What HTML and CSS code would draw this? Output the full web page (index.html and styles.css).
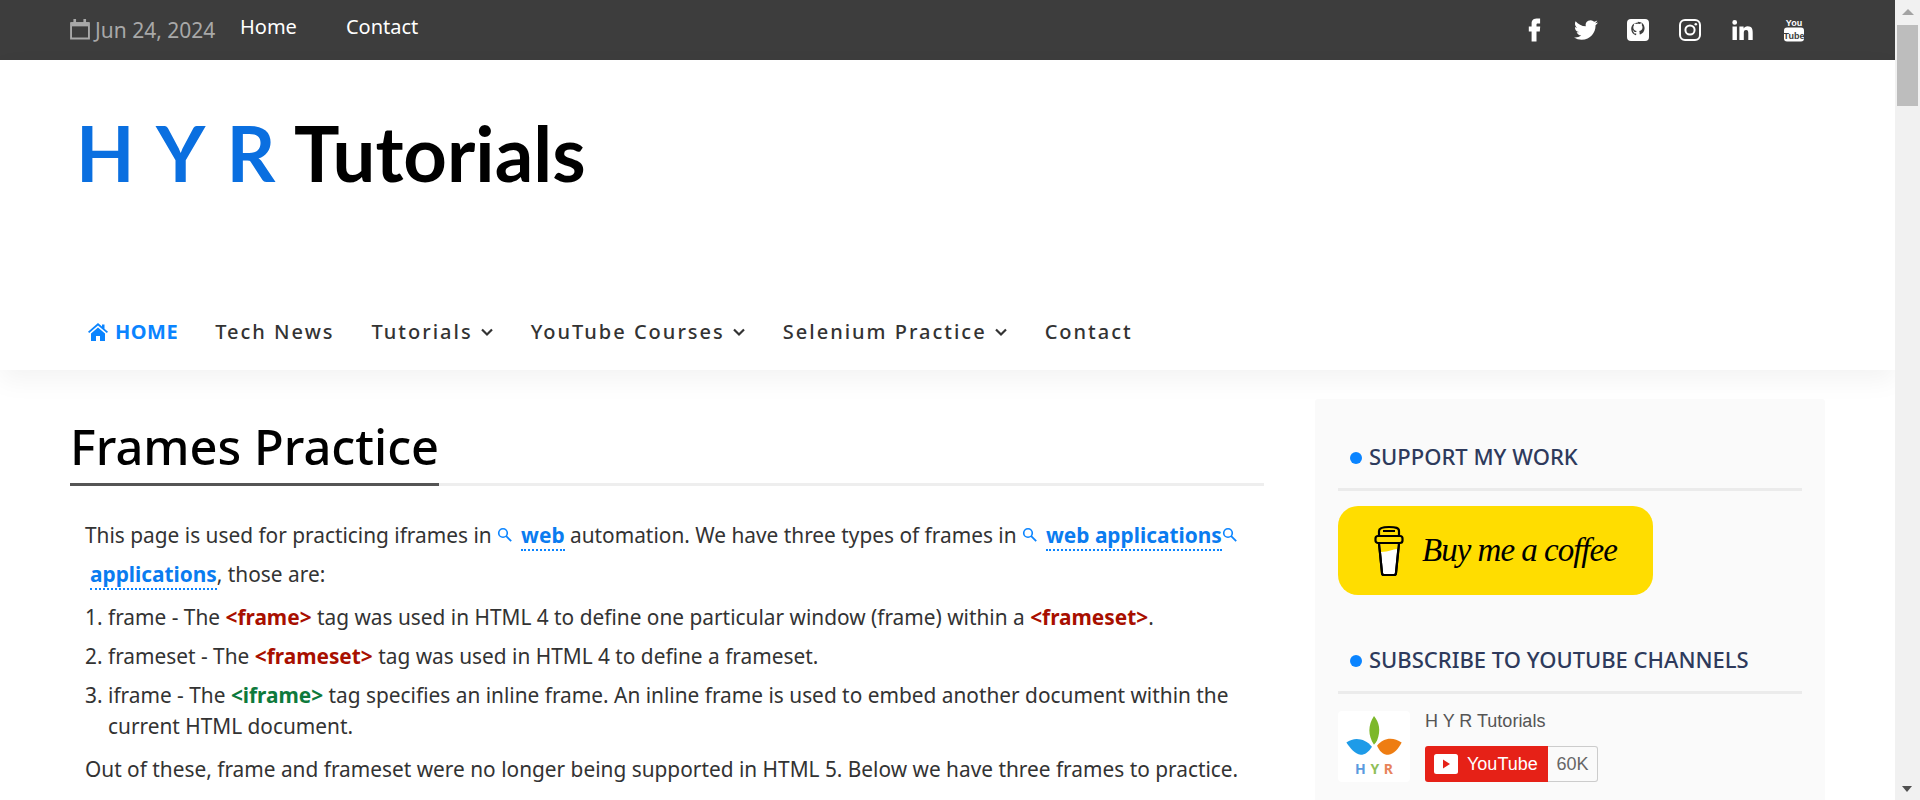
FILE: index.html
```html
<!DOCTYPE html>
<html lang="en">
<head>
    <meta charset="UTF-8">
    <title>Frames Practice - H Y R Tutorials</title>
    <link rel="stylesheet" href="styles.css">
</head>
<body>
<div class="window">
    <div class="page">
        <div class="topbar">
            <div class="topbar-left">
                <span class="date">
                    <svg class="cal-icon" viewBox="0 0 19 20"><path d="M1 4.500h17V19H1z" fill="none" stroke="#a8a8a8" stroke-width="1.800"/><path d="M1 3.500h17v4H1z" fill="#a8a8a8"/><path d="M4.500 0.500v4 M14 0.500v4" stroke="#a8a8a8" stroke-width="2.500"/></svg>
                    Jun 24, 2024
                </span>
                <a class="top-link" href="#">Home</a>
                <a class="top-link" href="#">Contact</a>
            </div>
            <div class="socials">
                <svg class="social" viewBox="0 0 24 24"><path fill="#fff" d="M14.500 8.500V6.600c0-.9.6-1.100 1-1.100h2.600V.5L14.500.5c-4 0-4.900 3-4.900 4.900v3.100H6.800v5h2.800V23.500h4.900v-10h3.300l.4-5z"/></svg>
                <svg class="social" viewBox="0 0 24 24"><path fill="#fff" d="M23.953 4.570a10 10 0 01-2.825.775 4.958 4.958 0 002.163-2.723c-.951.555-2.005.959-3.127 1.184a4.920 4.920 0 00-8.384 4.482C7.690 8.095 4.067 6.130 1.640 3.162a4.822 4.822 0 00-.666 2.475c0 1.710.870 3.213 2.188 4.096a4.904 4.904 0 01-2.228-.616v.060a4.923 4.923 0 003.946 4.827 4.996 4.996 0 01-2.212.085 4.936 4.936 0 004.604 3.417 9.867 9.867 0 01-6.102 2.105c-.390 0-.779-.023-1.170-.067a13.995 13.995 0 007.557 2.209c9.053 0 13.998-7.496 13.998-13.985 0-.210 0-.420-.015-.630A9.935 9.935 0 0024 4.590z"/></svg>
                <svg class="social" viewBox="0 0 24 24"><rect x="1" y="1" width="22" height="22" rx="4" fill="#fff"/><path fill="#3d3d3d" d="M12 4.500c-4 0-6.800 2.800-6.800 6.500 0 2.900 1.900 5.400 4.500 6.200.3 0 .5-.1.5-.4v-1.300c-1.700.4-2.300-.7-2.500-1.300-.1-.3-.6-1.100-.9-1.300-.2-.1-.3-.4 0-.4.600 0 1 .5 1.100.8.700 1.100 1.700.8 2.300.6 0-.5.200-.8.500-1-1.700-.2-3.400-.9-3.400-3.700 0-.8.200-1.500.700-2 0-.2-.300-1 .1-2 0 0 .7-.2 2 .7.600-.1 1.200-.2 1.800-.2s1.200.1 1.800.2c1.300-.9 2-.7 2-.7.400 1 .1 1.800.1 2 .5.500.7 1.200.7 2 0 2.800-1.700 3.500-3.400 3.700.3.200.5.700.5 1.300v1.900c0 .3.200.4.500.4 2.600-.8 4.500-3.300 4.500-6.200 0-3.700-2.800-6.500-6.800-6.500z"/></svg>
                <svg class="social" viewBox="0 0 24 24"><rect x="2" y="2" width="20" height="20" rx="5" fill="none" stroke="#fff" stroke-width="2"/><circle cx="12" cy="12" r="4.600" fill="none" stroke="#fff" stroke-width="2"/><circle cx="17.800" cy="6.200" r="1.300" fill="#fff"/></svg>
                <svg class="social" viewBox="0 0 24 24"><path fill="#fff" d="M2.500 8.500h4.400V22H2.500z M4.700 2a2.400 2.400 0 110 4.800 2.400 2.400 0 010-4.800z M9.400 8.500h4.200v1.900c.6-1.100 2-2.200 4-2.200 4.300 0 5.100 2.800 5.100 6.500V22h-4.400v-6.500c0-1.600 0-3.500-2.200-3.500s-2.300 1.700-2.300 3.400V22H9.400z"/></svg>
                <svg class="social" viewBox="0 0 24 24"><text class="yt-you" x="12" y="8" text-anchor="middle">You</text><rect x="2" y="9.500" width="20" height="14" rx="3" fill="#fff"/><text class="yt-tube" x="12" y="20.500" text-anchor="middle">Tube</text></svg>
            </div>
        </div>

        <header class="masthead">
            <div class="logo"><span class="logo-hyr">H Y R</span><span class="logo-name">Tutorials</span></div>
            <nav class="mainnav">
                <a class="nav-item active" href="#">
                    <svg class="home-icon" viewBox="0 0 20 18"><path fill="#0a84ff" d="M10 0l4 3.500V1.500h2.500v4.200L20 8.800l-1.200 1.300L10 2.500 1.200 10.100 0 8.800z M3 10.500L10 4.500l7 6V18h-5v-5H8v5H3z"/></svg>
                    HOME
                </a>
                <a class="nav-item" href="#">Tech News</a>
                <a class="nav-item" href="#">Tutorials <svg class="chev" viewBox="0 0 14 10"><path d="M2 2.500l5 5 5-5" fill="none" stroke="#333" stroke-width="2.200"/></svg></a>
                <a class="nav-item" href="#">YouTube Courses <svg class="chev" viewBox="0 0 14 10"><path d="M2 2.500l5 5 5-5" fill="none" stroke="#333" stroke-width="2.200"/></svg></a>
                <a class="nav-item" href="#">Selenium Practice <svg class="chev" viewBox="0 0 14 10"><path d="M2 2.500l5 5 5-5" fill="none" stroke="#333" stroke-width="2.200"/></svg></a>
                <a class="nav-item" href="#">Contact</a>
            </nav>
        </header>

        <div class="content">
            <main class="post">
                <div class="post-head"><h1>Frames Practice</h1></div>
                <div class="post-body">
                    <p class="lead">This page is used for practicing iframes in <svg class="lens" viewBox="0 0 16 16"><circle cx="6" cy="6" r="4.300" fill="none" stroke="#0a84ff" stroke-width="1.600"/><path d="M9.200 9.200l5 5" stroke="#0a84ff" stroke-width="1.800"/></svg><a class="kw" href="#">web</a> automation. We have three types of frames in <svg class="lens" viewBox="0 0 16 16"><circle cx="6" cy="6" r="4.300" fill="none" stroke="#0a84ff" stroke-width="1.600"/><path d="M9.200 9.200l5 5" stroke="#0a84ff" stroke-width="1.800"/></svg><a class="kw" href="#">web applications</a><svg class="lens lens-tight" viewBox="0 0 16 16"><circle cx="6" cy="6" r="4.300" fill="none" stroke="#0a84ff" stroke-width="1.600"/><path d="M9.200 9.200l5 5" stroke="#0a84ff" stroke-width="1.800"/></svg> <a class="kw kw-indent" href="#">applications</a>, those are:</p>
                    <ol class="frame-list">
                        <li>frame - The <b class="tag-red">&lt;frame&gt;</b> tag was used in HTML 4 to define one particular window (frame) within a <b class="tag-red">&lt;frameset&gt;</b>.</li>
                        <li>frameset - The <b class="tag-red">&lt;frameset&gt;</b> tag was used in HTML 4 to define a frameset.</li>
                        <li>iframe - The <b class="tag-green">&lt;iframe&gt;</b> tag specifies an inline frame. An inline frame is used to embed another document within the current HTML document.</li>
                    </ol>
                    <p class="outro">Out of these, frame and frameset were no longer being supported in HTML 5. Below we have three frames to practice.</p>
                </div>
            </main>

            <aside class="sidebar">
                <h3 class="widget-title"><span class="dot"></span>SUPPORT MY WORK</h3>
                <a class="coffee" href="#">
                    <svg class="cup" viewBox="0 0 30 52"><path d="M5 18l3 30c0 1.500 1 2 2 2h10c1 0 2-.5 2-2l3-30z" fill="#fff" stroke="#000" stroke-width="2.200"/><path d="M6 18h18l-.6 6c-5 0-8 3-16.600 3z" fill="#ffdd00"/><path d="M5 18l3 30c0 1.500 1 2 2 2h10c1 0 2-.5 2-2l3-30z" fill="none" stroke="#000" stroke-width="2.200"/><rect x="1.500" y="11" width="27" height="7" rx="2.500" fill="#ffdd00" stroke="#000" stroke-width="2.200"/><path d="M5 11V6c0-3 3-4 10-4s10 1 10 4v5 M9 6h12" fill="none" stroke="#000" stroke-width="2.200"/></svg>
                    <span class="coffee-text">Buy me a coffee</span>
                </a>
                <h3 class="widget-title second"><span class="dot"></span>SUBSCRIBE TO YOUTUBE CHANNELS</h3>
                <div class="channel">
                    <div class="avatar">
                        <svg class="leaves" viewBox="0 0 56 44"><path d="M28 0c5 6 7 14 3 24-1 2-2 3-3 4-6-9-6-19 0-28z" fill="#7cb82a"/><path d="M1 26c8-6 18-4 25 4-3 5-7 8-11 8-6-1-10-6-14-12z" fill="#1e9be8"/><path d="M55 26c-8-6-18-5-24 3 2 5 6 9 11 9 6-1 10-6 13-12z" fill="#ee7d12"/></svg>
                        <div class="avatar-name"><span class="h">H</span> <span class="y">Y</span> <span class="r">R</span></div>
                    </div>
                    <div class="channel-info">
                        <div class="channel-name">H Y R Tutorials</div>
                        <div class="yt-btn">
                            <span class="yt-red"><svg class="yt-play" viewBox="0 0 24 20"><rect width="24" height="20" rx="2.500" fill="#fff"/><path d="M9 5.500l7 4.500-7 4.500z" fill="#e62117"/></svg>YouTube</span><span class="yt-count">60K</span>
                        </div>
                    </div>
                </div>
            </aside>
        </div>
    </div>

    <div class="scrollbar">
        <div class="arrow-up"></div>
        <div class="thumb"></div>
        <div class="arrow-down"></div>
    </div>
</div>
</body>
</html>
```

FILE: styles.css
```css
* {
    box-sizing: border-box;
}
html, body {
    margin: 0;
    padding: 0;
    height: 800px;
    overflow: hidden;
}
body {
    font-family: "Noto Sans", Arial, sans-serif;
    font-size: 20.850px;
    color: #333;
    background: #fff;
}
a {
    text-decoration: none;
}
.window {
    display: flex;
    height: 800px;
}
.page {
    flex: 1;
    min-width: 0;
    overflow: hidden;
}

/* top bar */
.topbar {
    height: 60px;
    background: #3d3d3d;
    display: flex;
    justify-content: space-between;
    align-items: center;
    padding: 0 89px 0 70px;
}
.topbar-left {
    display: flex;
    align-items: center;
}
.date {
    display: flex;
    align-items: center;
    gap: 5px;
    width: 170px;
    color: #a8a8a8;
    font-size: 21px;
}
.cal-icon {
    width: 20px;
    height: 22px;
    margin-top: -2px;
}
.top-link {
    color: #fff;
    font-size: 20px;
    margin-right: 49px;
    margin-top: -8px;
}
.socials {
    display: flex;
    gap: 28px;
}
.social {
    width: 24px;
    height: 24px;
}
.yt-you {
    font: bold 9px "Liberation Sans", sans-serif;
    fill: #fff;
}
.yt-tube {
    font: bold 9px "Liberation Sans", sans-serif;
    fill: #3d3d3d;
}

/* header */
.masthead {
    height: 310px;
    background: #fff;
    box-shadow: 0 10px 25px rgba(0, 0, 0, 0.05);
    padding: 52px 0 0 76px;
    position: relative;
}
.logo {
    display: flex;
    align-items: baseline;
    height: 82px;
    font-family: Lato, sans-serif;
    font-size: 76px;
    line-height: 82px;
    color: #000;
}
.logo-hyr {
    color: #0a6fe0;
    font-weight: 700;
    width: 218px;
    word-spacing: 6px;
}
.logo-name {
    font-weight: 700;
}
.mainnav {
    display: flex;
    align-items: center;
    gap: 37px;
    margin-top: 124px;
    margin-left: 12px;
}
.nav-item {
    display: flex;
    align-items: center;
    gap: 7px;
    color: #333;
    font-size: 20px;
    letter-spacing: 2px;
    font-weight: 500;
}
.nav-item.active {
    color: #0a84ff;
    font-weight: 700;
    letter-spacing: 0.5px;
}
.home-icon {
    width: 20px;
    height: 18px;
}
.chev {
    width: 14px;
    height: 10px;
}

/* content */
.content {
    display: grid;
    grid-template-columns: 1194px 510px;
    column-gap: 51px;
    padding: 29px 0 0 70px;
}
.post-head {
    border-bottom: 3px solid #eee;
    height: 87px;
}
h1 {
    display: inline-block;
    margin: 0;
    height: 87px;
    padding-top: 17px;
    border-bottom: 3px solid #555;
    font-size: 48.800px;
    line-height: 60px;
    font-weight: 500;
    color: #000;
}
.post-body {
    padding: 0 15px;
}
.lead {
    margin: 30px 0 0;
    line-height: 39px;
}
.lens {
    width: 16px;
    height: 16px;
    margin-right: 8px;
}
.lens-tight {
    margin-right: 0;
}
.kw {
    color: #0a7cf0;
    font-weight: 700;
    border-bottom: 2px dotted #0a84ff;
    line-height: 1;
}
.kw-indent {
    margin-left: 5px;
}
.frame-list {
    margin: 8px 0 0;
    padding: 0 0 0 23px;
}
.frame-list li {
    line-height: 31px;
    margin-bottom: 8px;
}
.tag-red {
    color: #a80f00;
}
.tag-green {
    color: #0e7a3c;
}
.outro {
    margin: 12px 0 0;
    line-height: 31px;
}

/* sidebar */
.sidebar {
    background: #fafafa;
    height: 420px;
    padding: 37px 23px 0;
    border-radius: 3px;
}
.widget-title {
    margin: 0;
    height: 55px;
    border-bottom: 3px solid #ebebeb;
    padding: 0 0 0 12px;
    font-size: 22px;
    line-height: 40px;
    font-weight: 500;
    color: #2e3a5c;
    display: flex;
    align-items: flex-start;
}
.widget-title.second {
    margin-top: 44px;
}
.dot {
    width: 12px;
    height: 12px;
    border-radius: 50%;
    background: #0a84ff;
    margin: 16px 7px 0 0;
}
.coffee {
    display: flex;
    align-items: center;
    gap: 18px;
    width: 315px;
    height: 89px;
    margin-top: 15px;
    padding-left: 36px;
    background: #ffdd00;
    border-radius: 20px;
}
.cup {
    width: 30px;
    height: 52px;
}
.coffee-text {
    font-family: "Liberation Serif", serif;
    font-style: italic;
    font-size: 33px;
    letter-spacing: -1px;
    color: #000;
}
.channel {
    display: flex;
    gap: 15px;
    margin-top: 17px;
}
.avatar {
    width: 72px;
    height: 71px;
    background: #fff;
    border-radius: 4px;
    padding-top: 5px;
    text-align: center;
}
.leaves {
    display: block;
    width: 58px;
    height: 45px;
    margin: 0 auto;
}
.avatar-name {
    font-size: 14px;
    font-weight: 700;
    line-height: 18px;
    margin-top: -1px;
    word-spacing: 1px;
}
.avatar-name .h { color: #5b9be0; }
.avatar-name .y { color: #8fbf5a; }
.avatar-name .r { color: #e8835a; }
.channel-info {
    font-family: "Liberation Sans", Arial, sans-serif;
}
.channel-name {
    font-size: 18px;
    line-height: 20px;
    color: #555;
}
.yt-btn {
    display: flex;
    margin-top: 15px;
    height: 36px;
}
.yt-red {
    display: flex;
    align-items: center;
    gap: 9px;
    width: 123px;
    padding-left: 9px;
    background: #e62117;
    color: #fff;
    font-size: 18px;
    border-radius: 3px 0 0 3px;
}
.yt-play {
    width: 24px;
    height: 20px;
}
.yt-count {
    display: flex;
    align-items: center;
    justify-content: center;
    width: 50px;
    border: 1px solid #ccc;
    border-left: 0;
    border-radius: 0 3px 3px 0;
    font-size: 18px;
    color: #666;
}

/* page scrollbar */
.scrollbar {
    width: 25px;
    background: #f1f1f1;
    position: relative;
    padding: 25px 2px 0;
}
.thumb {
    height: 81px;
    background: #bdbdbd;
}
.arrow-up {
    position: absolute;
    top: 9px;
    left: 7px;
    border: 6px solid transparent;
    border-top: 0;
    border-bottom: 6px solid #a3a3a3;
}
.arrow-down {
    position: absolute;
    bottom: 8px;
    left: 7px;
    border: 5px solid transparent;
    border-bottom: 0;
    border-top: 6px solid #505050;
}
```
